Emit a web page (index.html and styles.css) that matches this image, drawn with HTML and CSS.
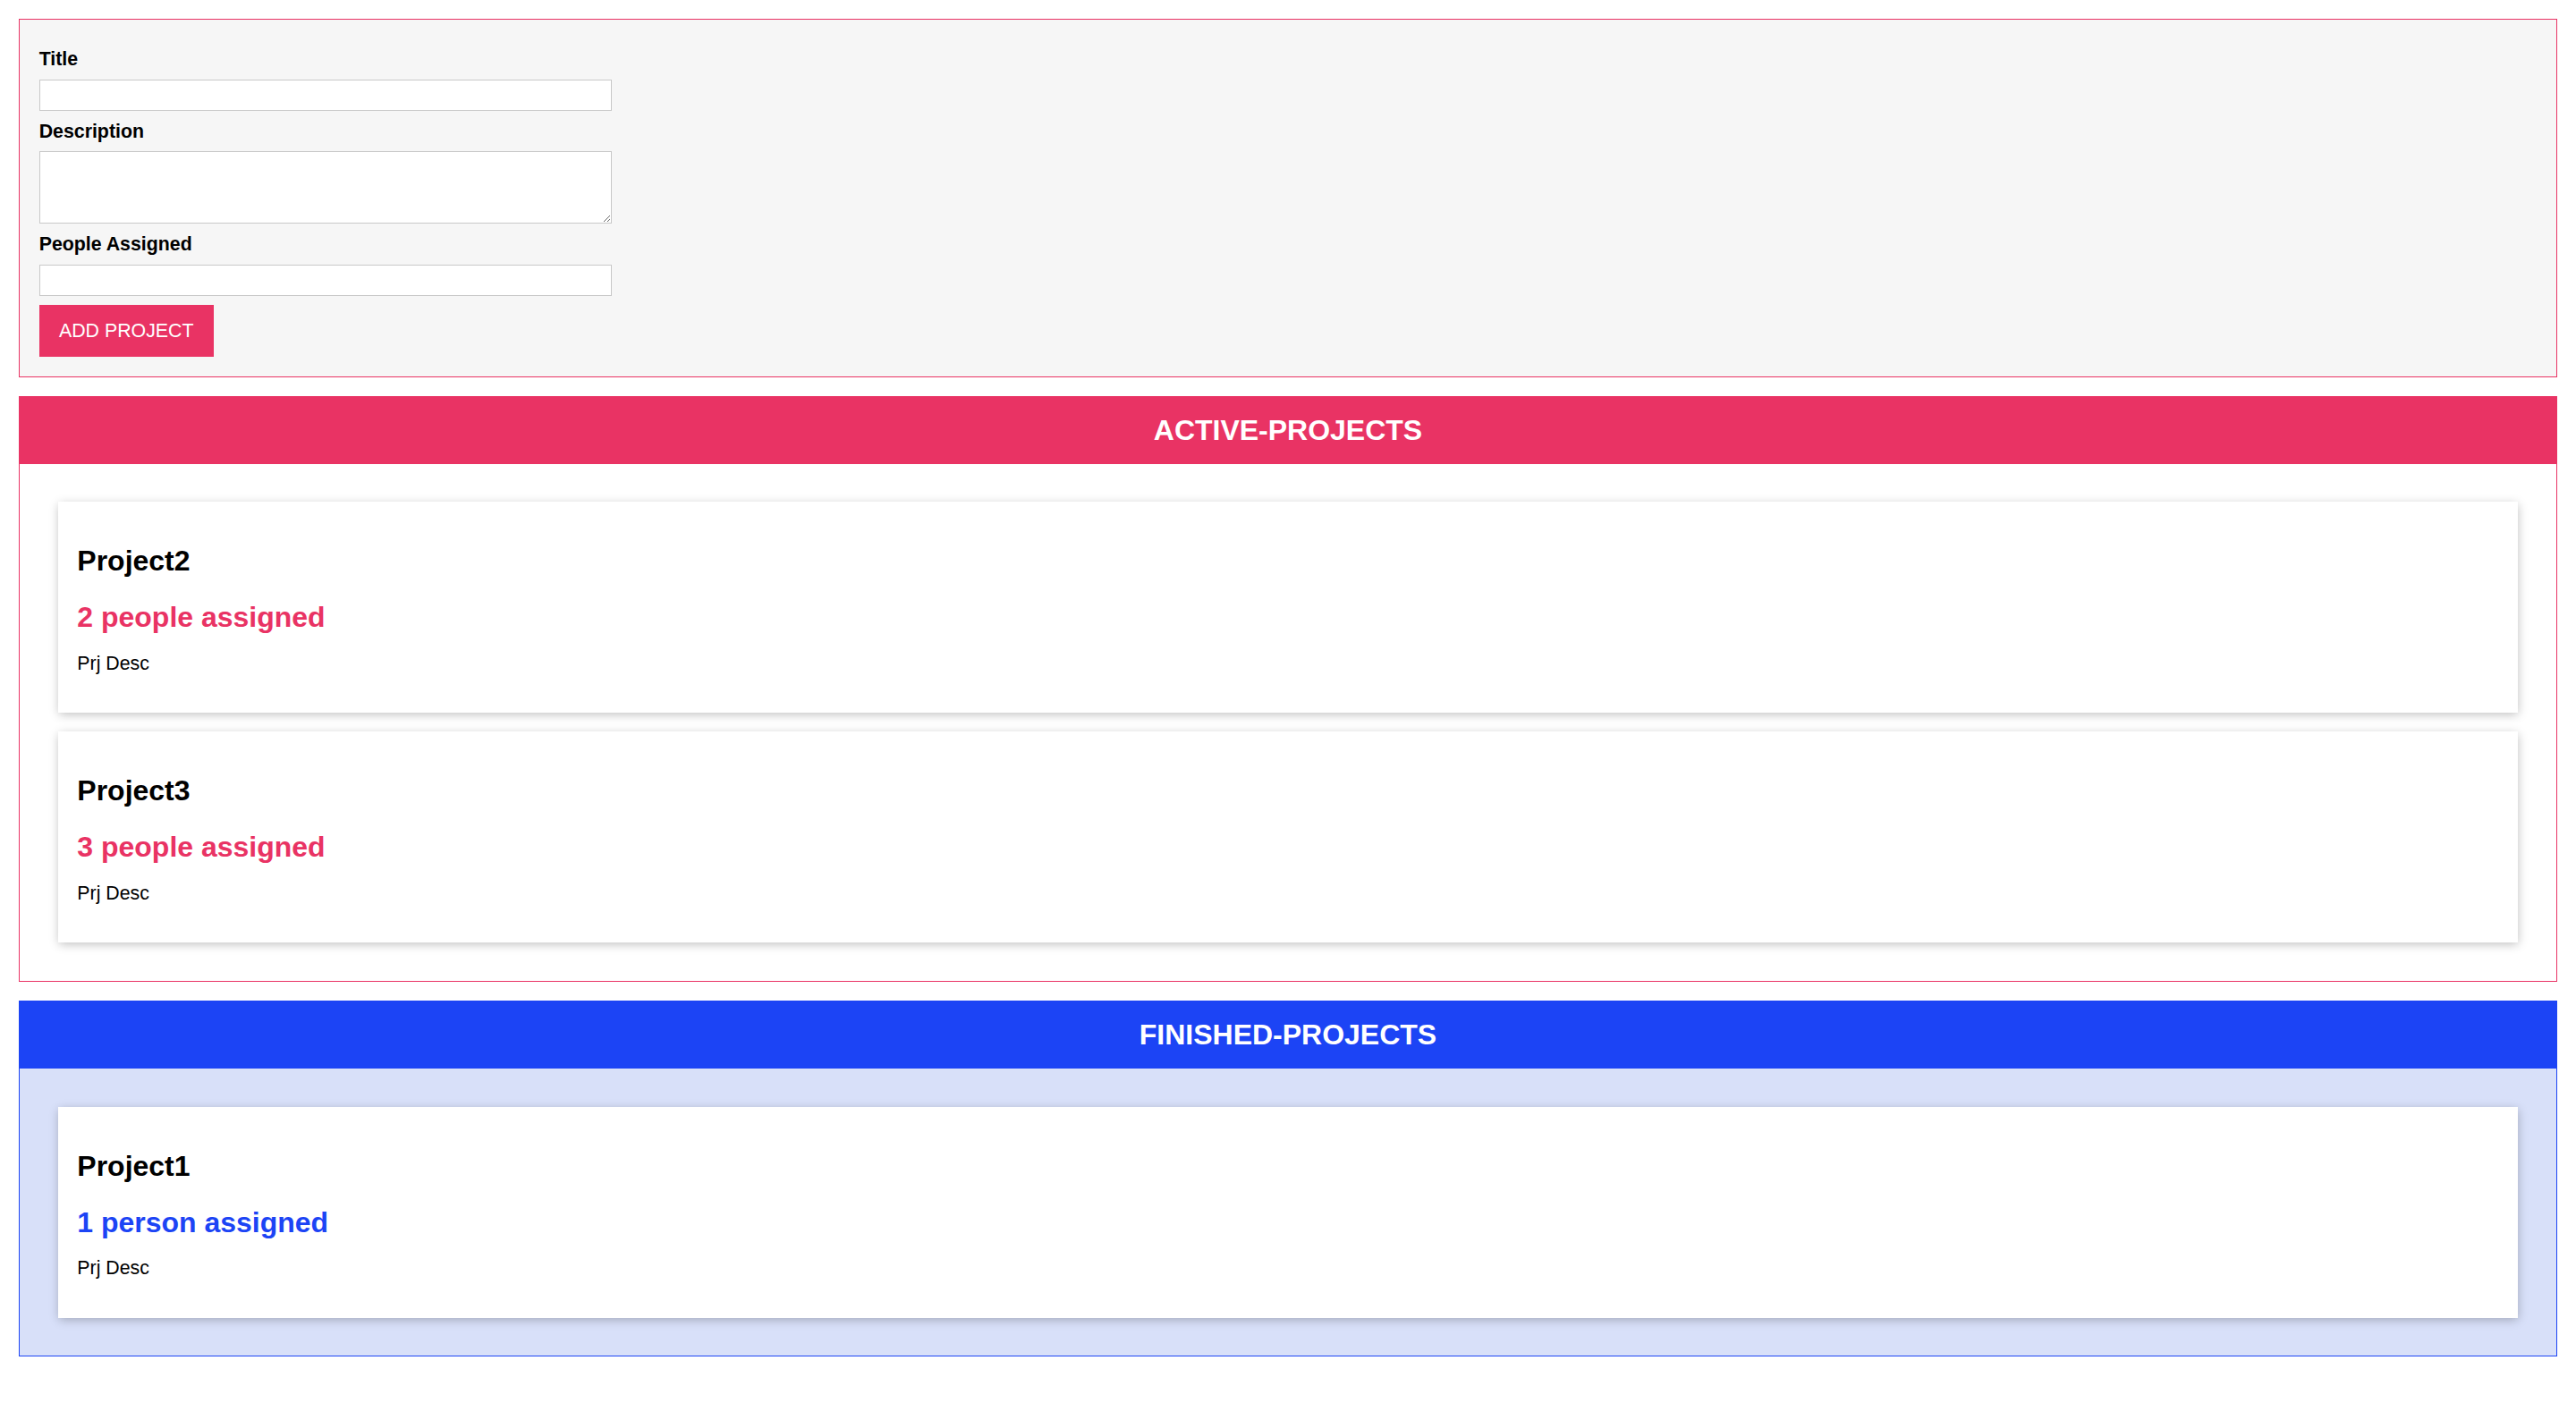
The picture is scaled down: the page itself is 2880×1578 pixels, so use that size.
FILE: index.html
```html
<!DOCTYPE html>
<html lang="en">
<head>
<meta charset="utf-8">
<title>ProjectManager</title>
<link rel="stylesheet" href="styles.css">
</head>
<body>
<div id="app">
  <form class="user-input">
    <div class="form-control">
      <label for="title">Title</label>
      <input type="text" id="title">
    </div>
    <div class="form-control">
      <label for="description">Description</label>
      <textarea id="description" rows="3"></textarea>
    </div>
    <div class="form-control">
      <label for="people">People Assigned</label>
      <input type="number" id="people">
    </div>
    <button type="submit">ADD PROJECT</button>
  </form>

  <section class="projects" id="active-projects">
    <header><h2>ACTIVE-PROJECTS</h2></header>
    <ul>
      <li>
        <h2>Project2</h2>
        <h3>2 people assigned</h3>
        <p>Prj Desc</p>
      </li>
      <li>
        <h2>Project3</h2>
        <h3>3 people assigned</h3>
        <p>Prj Desc</p>
      </li>
    </ul>
  </section>

  <section class="projects" id="finished-projects">
    <header><h2>FINISHED-PROJECTS</h2></header>
    <ul class="droppable">
      <li>
        <h2>Project1</h2>
        <h3>1 person assigned</h3>
        <p>Prj Desc</p>
      </li>
    </ul>
  </section>
</div>
</body>
</html>
```

FILE: styles.css
```css
* {
  box-sizing: border-box;
}

html {
  font-family: "Liberation Sans", Arial, sans-serif;
  font-size: 21.3333px;
}

body {
  margin: 0;
  background: #ffffff;
  color: #000000;
}

label,
input,
textarea {
  display: block;
  margin: 0.5rem 0;
}

label {
  font-weight: bold;
  line-height: 24px;
}

input,
textarea {
  font: inherit;
  padding: 0.2rem 0.4rem;
  width: 100%;
  max-width: 30rem;
  border: 1.3333px solid #c9c9c9;
  background: #ffffff;
  border-radius: 0;
  outline: none;
}

input {
  height: 35px;
}

textarea {
  height: 81px;
}

input[type="number"]::-webkit-inner-spin-button,
input[type="number"]::-webkit-outer-spin-button {
  -webkit-appearance: none;
  margin: 0;
}

button {
  font: inherit;
  line-height: 24px;
  height: 58px;
  background: #e93364;
  border: 1.3333px solid #e93364;
  color: #ffffff;
  padding: 0 1rem;
  border-radius: 0;
  cursor: pointer;
  vertical-align: top;
}

.user-input {
  margin: 1rem;
  padding: 1rem;
  border: 1.3333px solid #e93364;
  background: #f6f6f6;
}

.projects {
  margin: 1rem;
  border: 1.3333px solid #e93364;
}

.projects header {
  background: #e93364;
  height: 3.5rem;
  display: flex;
  justify-content: center;
  align-items: center;
}

.projects header h2 {
  margin: 0;
  color: #ffffff;
  font-size: 1.5rem;
  font-weight: bold;
}

.projects ul {
  list-style: none;
  margin: 0;
  padding: 1rem;
}

.projects li {
  background: #ffffff;
  box-shadow: 1.3333px 2.6667px 10.6667px rgba(0, 0, 0, 0.26);
  padding: 1rem;
  margin: 1rem;
}

.projects li h2 {
  font-size: 1.5rem;
  line-height: 36.5px;
  margin: 0.83em 0;
  color: #000000;
}

.projects li h3 {
  font-size: 1.5rem;
  line-height: 36.5px;
  margin: 0.5rem 0;
  color: #e93364;
}

.projects li p {
  margin: 1em 0;
  line-height: 24.5px;
}

#finished-projects {
  border-color: #1c44f5;
}

#finished-projects header {
  background: #1c44f5;
}

#finished-projects li h3 {
  color: #1c44f5;
}

#finished-projects .droppable {
  background: #d8e0f9;
}
```
